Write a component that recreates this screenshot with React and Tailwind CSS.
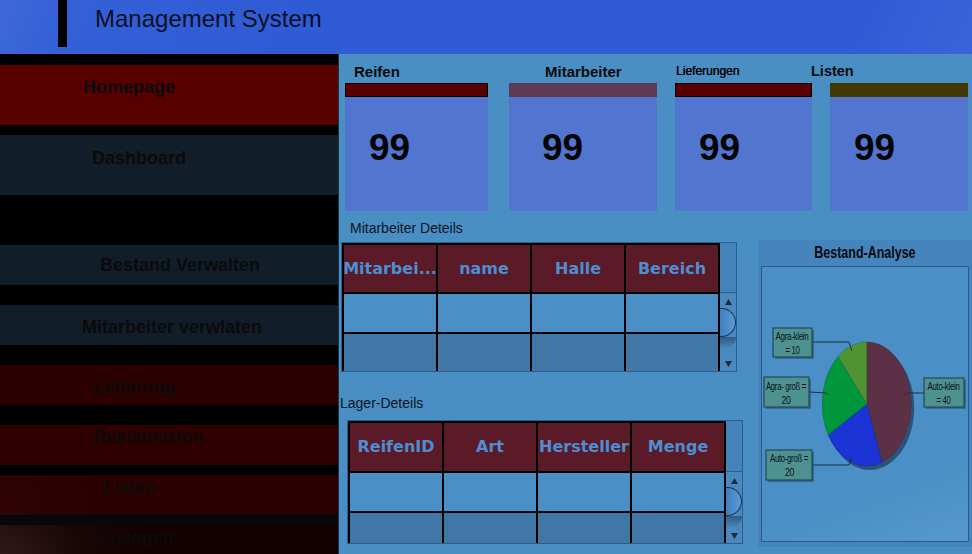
import React from "react";

const SANS = { fontFamily: '"Liberation Sans", Arial, sans-serif' };
const VERD = { fontFamily: '"DejaVu Sans", Verdana, sans-serif' };

function NavItem({ label, h, bg, pl, pt, mt, extra = "" }) {
  return (
    <div
      className={`w-full shrink-0 text-[18px] font-bold leading-[18px] text-[#0b0b0b] ${extra}`}
      style={{ height: h, background: bg, paddingLeft: pl, paddingTop: pt, marginTop: mt }}
    >
      {label}
    </div>
  );
}

function Card({ w, bar, bordered, numLeft }) {
  return (
    <div className="flex flex-col shrink-0" style={{ width: w }}>
      <div
        className={`h-[14px] ${bordered ? "border border-black" : ""}`}
        style={{ background: bar }}
      />
      <div className="h-[114px] bg-[#5276cf] pt-[32px]">
        <div
          className="text-[37px] font-bold leading-[37px] text-[#050505]"
          style={{ paddingLeft: numLeft }}
        >
          99
        </div>
      </div>
    </div>
  );
}

function Arrow({ up }) {
  return (
    <svg width="9" height="8" viewBox="0 0 9 8">
      <polygon points={up ? "4.5,1 8,7 1,7" : "1,1 8,1 4.5,7"} fill="#1c2c40" />
    </svg>
  );
}

function Table({ headers, headH, r2H, ml, mt }) {
  return (
    <div
      className="w-[396px] border border-[#2e5f8c] flex"
      style={{ marginLeft: ml, marginTop: mt }}
    >
      <div className="w-[378px] bg-black p-[2px] pb-0 flex flex-col gap-[2px]">
        <div className="grid grid-cols-4 gap-[2px]">
          {headers.map((t, i) => (
            <div
              key={i}
              className="bg-[#5a1a28] flex items-center justify-center text-[16px] font-bold text-[#4b8fd2] overflow-hidden whitespace-nowrap"
              style={{ ...VERD, height: headH }}
            >
              {t}
            </div>
          ))}
        </div>
        <div className="grid grid-cols-4 gap-[2px]">
          {[0, 1, 2, 3].map((i) => (
            <div key={i} className="h-[38px] bg-[#4a8fc5]" />
          ))}
        </div>
        <div className="grid grid-cols-4 gap-[2px]">
          {[0, 1, 2, 3].map((i) => (
            <div key={i} className="bg-[#4177a6]" style={{ height: r2H }} />
          ))}
        </div>
      </div>
      <div className="flex-1 flex flex-col bg-[#4a88bf]">
        <div
          className="border-b border-[#2e5f8c] bg-[#4783bb]"
          style={{ height: headH + 3 }}
        />
        <div className="flex-1 flex flex-col items-center">
          <div className="mt-[5px]">
            <Arrow up />
          </div>
          <div className="mt-[2px] w-full h-[29px] rounded-r-full border border-l-0 border-[#163656] bg-[linear-gradient(90deg,#3f7fbe,#5a9ad4)]" />
          <div className="w-full h-[12px] bg-[linear-gradient(180deg,#2f5a85,#4a88bf)] rounded-br-full" />
          <div className="mt-auto mb-[3px]">
            <Arrow />
          </div>
        </div>
      </div>
    </div>
  );
}

function PieChart() {
  const cx = 104.7,
    cy = 137,
    rx = 44.5,
    ry = 62;
  const pt = (deg) => {
    const r = (deg * Math.PI) / 180;
    return [cx + rx * Math.sin(r), cy - ry * Math.cos(r)];
  };
  const slice = (a0, a1) => {
    const [x0, y0] = pt(a0);
    const [x1, y1] = pt(a1);
    const large = a1 - a0 > 180 ? 1 : 0;
    return `M${cx},${cy} L${x0},${y0} A${rx},${ry} 0 ${large} 1 ${x1},${y1} Z`;
  };
  const box = (x, y, w, h) => (
    <g>
      <rect x={x + 2} y={y + 2} width={w} height={h} fill="#2c5a80" opacity="0.7" />
      <rect x={x} y={y} width={w} height={h} fill="#4d9190" stroke="#1d3a48" strokeWidth="1" />
    </g>
  );
  const txt = (x, y, s, len) => (
    <text
      x={x}
      y={y}
      textAnchor="middle"
      fontSize="10"
      letterSpacing="-0.4"
      fill="#0c1418"
      textLength={len}
      lengthAdjust="spacingAndGlyphs"
      style={SANS}
    >
      {s}
    </text>
  );
  return (
    <svg width="206" height="273" viewBox="0 0 206 273" className="block">
      <ellipse cx={cx + 3} cy={cy + 4} rx={rx} ry={ry} fill="#2b5379" />
      <path d={slice(0, 160)} fill="#5c3146" stroke="#4a2838" strokeWidth="0.5" />
      <path d={slice(160, 240)} fill="#1c33d6" stroke="#17289e" strokeWidth="0.5" />
      <path d={slice(240, 320)} fill="#00963b" stroke="#0a6a30" strokeWidth="0.5" />
      <path d={slice(320, 360)} fill="#4e9433" stroke="#3a6e28" strokeWidth="0.5" />

      <polyline points="50,75 87,75 90,84" fill="none" stroke="#1d2f3c" strokeWidth="1" />
      <polyline points="47,125 64,126 67,128" fill="none" stroke="#1d2f3c" strokeWidth="1" />
      <polyline points="50,198 87,198 90,190" fill="none" stroke="#1d2f3c" strokeWidth="1" />
      <polyline points="162,126 145,126 142,128" fill="none" stroke="#1d2f3c" strokeWidth="1" />

      {box(11, 61, 39, 29)}
      {txt(30, 73, "Agra-klein", 33)}
      {txt(30.5, 87, "= 10", 14)}

      {box(2, 110, 45, 30)}
      {txt(24, 122.5, "Agra- groß =", 40)}
      {txt(24, 136.5, "20", 9)}

      {box(4, 183, 46, 30)}
      {txt(27, 194.5, "Auto-groß =", 38)}
      {txt(27.5, 208.5, "20", 9)}

      {box(162, 111, 40, 29)}
      {txt(181.5, 123, "Auto-klein", 32)}
      {txt(181.5, 137, "= 40", 14)}
    </svg>
  );
}

export default function App() {
  return (
    <div className="w-[972px] h-[554px] overflow-hidden flex flex-col" style={SANS}>
      {/* Header */}
      <div className="h-[54px] shrink-0 flex items-start bg-[linear-gradient(115deg,#3f69d8_0%,#3360d6_8%,#2f5bd6_30%,#2f5bd6_88%,#3a65d8_100%)]">
        <div className="ml-[58px] w-[9px] h-[47px] bg-black" />
        <div className="ml-[28px] mt-[5px] text-[24px] leading-[28px] text-[#0a0f22]">
          Management System
        </div>
      </div>

      <div className="flex flex-1 min-h-0">
        {/* Sidebar */}
        <div className="w-[339px] shrink-0 bg-black border-r border-[#1d3347] flex flex-col overflow-hidden">
          <NavItem label="Homepage" h={60} bg="#580000" pl={83} pt={13} mt={11} />
          <NavItem label="Dashboard" h={60} bg="#111d28" pl={92} pt={14} mt={10} />
          <NavItem label="Bestand Verwalten" h={40} bg="#111d28" pl={100} pt={11} mt={50} />
          <NavItem label="Mitarbeiter verwlaten" h={40} bg="#111d28" pl={82} pt={13} mt={20} />
          <NavItem label="Lieferung" h={40} bg="#2b0000" pl={93} pt={13} mt={20} />
          <NavItem label="Reklamazion" h={40} bg="#2e0000" pl={93} pt={3} mt={20} />
          <NavItem
            label="Listen"
            h={40}
            bg="radial-gradient(circle at 0% 100%, #300404 0%, #2a0000 30%)"
            pl={103}
            pt={3}
            mt={10}
          />
          <div className="h-[10px] shrink-0 bg-[#080808]" />
          <NavItem
            label="Auslogen"
            h={40}
            bg="radial-gradient(circle at 0% 100%, #301a1a 0%, #1a0505 25%, #140000 45%)"
            pl={92}
            pt={3}
            mt={0}
          />
        </div>

        {/* Content */}
        <div className="flex-1 bg-[#4a8fc4] flex flex-col">
          {/* card labels */}
          <div className="mt-[10px] h-[15px] flex items-center pl-[15px] text-[#0a0a0a]">
            <div className="w-[191px] text-[15px] font-bold leading-[15px]">Reifen</div>
            <div className="w-[131px] text-[15px] font-bold leading-[15px]">Mitarbeiter</div>
            <div className="w-[135px] text-[12px] leading-[15px] text-[#000] [text-shadow:0.3px_0_0_#000]">
              Lieferungen
            </div>
            <div className="text-[14.5px] font-bold leading-[15px]">Listen</div>
          </div>
          {/* cards */}
          <div className="mt-[4px] flex pl-[6px]">
            <Card w={143} bar="#590000" bordered numLeft={24} />
            <div className="w-[21px]" />
            <Card w={148} bar="#5e3a55" numLeft={33} />
            <div className="w-[18px]" />
            <Card w={137} bar="#590000" bordered numLeft={24} />
            <div className="w-[18px]" />
            <Card w={138} bar="#433900" numLeft={24} />
          </div>

          {/* bottom */}
          <div className="flex">
            <div className="w-[419px] shrink-0 flex flex-col">
              <div className="mt-[10px] pl-[11px] text-[14px] leading-[14px] text-[#0a1420]">
                Mitarbeiter Deteils
              </div>
              <Table
                headers={["Mitarbei...", "name", "Halle", "Bereich"]}
                headH={47}
                r2H={37}
                ml={2}
                mt={7}
              />
              <div className="mt-[24px] pl-[1px] text-[14px] leading-[14px] text-[#0a1420]">
                Lager-Deteils
              </div>
              <Table
                headers={["ReifenID", "Art", "Hersteller", "Menge"]}
                headH={48}
                r2H={30}
                ml={8}
                mt={10}
              />
            </div>

            {/* chart panel */}
            <div className="mt-[29px] w-[214px] h-[307px] bg-[#4584bc] flex flex-col px-[3px]">
              <div className="h-[26px] flex items-center justify-center">
                <span className="inline-block scale-x-[0.78] text-[16px] font-bold leading-[16px] text-[#0a0a0a]">
                  Bestand-Analyse
                </span>
              </div>
              <div className="h-[276px] border border-[#2a5a88] bg-[linear-gradient(160deg,#4a8fc5_0%,#4a8fc5_75%,#5599cc_100%)]">
                <PieChart />
              </div>
            </div>
          </div>
        </div>
      </div>
    </div>
  );
}
